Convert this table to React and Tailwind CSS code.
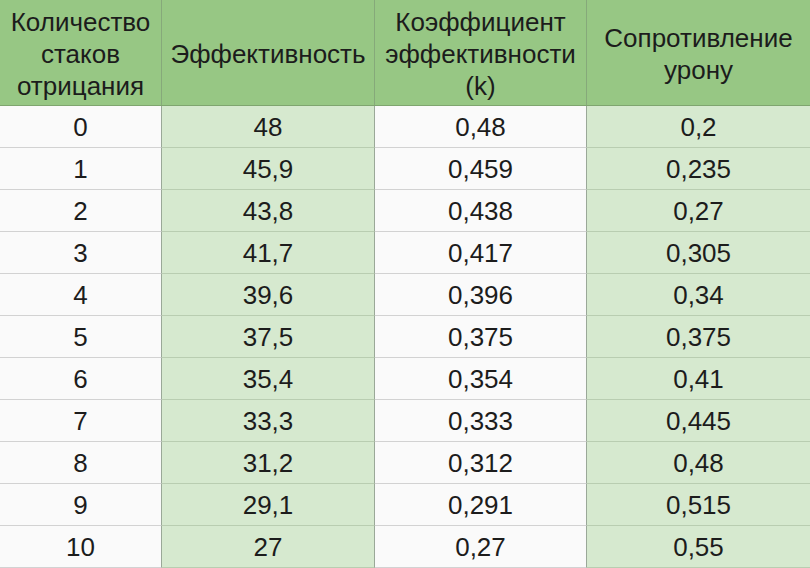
// Table: stacks of negation vs effectiveness
const rows = [
	['0', '48', '0,48', '0,2'],
	['1', '45,9', '0,459', '0,235'],
	['2', '43,8', '0,438', '0,27'],
	['3', '41,7', '0,417', '0,305'],
	['4', '39,6', '0,396', '0,34'],
	['5', '37,5', '0,375', '0,375'],
	['6', '35,4', '0,354', '0,41'],
	['7', '33,3', '0,333', '0,445'],
	['8', '31,2', '0,312', '0,48'],
	['9', '29,1', '0,291', '0,515'],
	['10', '27', '0,27', '0,55'],
]

const headers = [
	['Количество', 'стаков', 'отрицания'],
	['Эффективность'],
	['Коэффициент', 'эффективности', '(k)'],
	['Сопротивление', 'урону'],
]

const cols = 'grid grid-cols-[162px_213px_212px_223px]'

export default function App() {
	return (
		<div
			className="w-[810px] h-[568px] overflow-hidden bg-[#fafafa] text-[#1c1c1c]"
			style={{ fontFamily: '"Liberation Sans", Arial, sans-serif' }}
		>
			{/* header row */}
			<div className={`${cols} h-[106px] bg-[#97c784] border-b border-[#7fa56f]`}>
				{headers.map((lines, i) => (
					<div
						key={i}
						className={`flex flex-col items-center justify-center pt-[3px] text-[26px] leading-[32px] ${i < 3 ? 'border-r border-[#86a97a]' : ''}`}
					>
						{lines.map((l) => (
							<span key={l}>{l}</span>
						))}
					</div>
				))}
			</div>
			{/* data rows */}
			{rows.map((r, ri) => (
				<div key={ri} className={`${cols} h-[42px]`}>
					{r.map((v, ci) => {
						const green = ci % 2 === 1
						return (
							<div
								key={ci}
								className={`flex items-center justify-center pt-[1px] text-[26px] border-b ${
									green ? 'bg-[#d6e9cf] border-[#b9cdb1]' : 'bg-[#fafafa] border-[#d2d2d2]'
								} ${ci < 3 ? 'border-r border-r-[#9aa898]' : ''}`}
							>
								{v}
							</div>
						)
					})}
				</div>
			))}
		</div>
	)
}
